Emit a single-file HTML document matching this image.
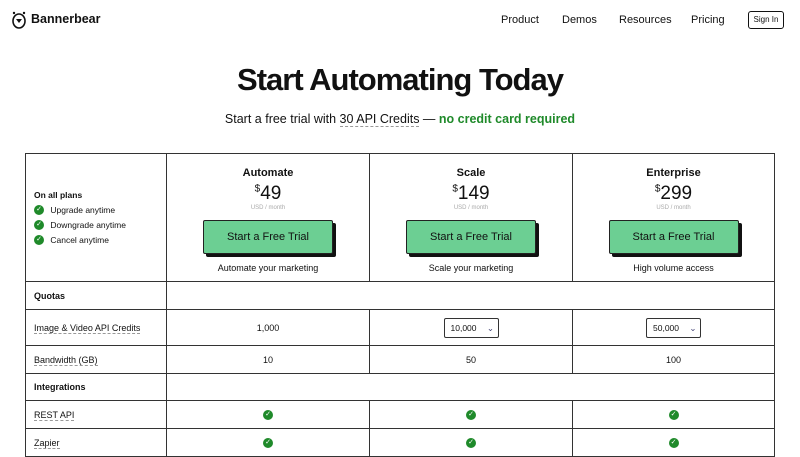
<!DOCTYPE html><html><head><style>
*{margin:0;padding:0;box-sizing:border-box}
body{width:800px;height:450px;overflow:hidden;background:#fff;font-family:"Liberation Sans",sans-serif;color:#111;position:relative}
.a{position:absolute}
.nav{font-size:11px}
table{position:absolute;left:25px;top:153px;width:750px;border-collapse:collapse;font-size:9px}
td{border:1px solid #333;text-align:center;vertical-align:middle}
td.l{text-align:left;padding-left:8px}
.u{border-bottom:1px dashed #999}
.ck{display:inline-block;width:10px;height:10px;border-radius:50%;background:#1f8a2a;color:#fff;font-size:7px;line-height:10px;text-align:center;vertical-align:middle}
.l .ck{margin-right:4px}
.btn{width:130px;height:34px;margin:0 auto;background:#6ccf93;border:1px solid #222;box-shadow:3px 3px 0 #111;border-radius:2px;font-size:11px;line-height:32px}
.sel{display:inline-block;width:55px;height:20px;border:1px solid #333;border-radius:2px;text-align:left;padding-left:6px;line-height:18px;font-size:8.5px}
</style></head><body>
<svg class="a" style="left:11px;top:11px" width="16" height="18" viewBox="0 0 16 18"><ellipse cx="8" cy="10" rx="6" ry="7" fill="none" stroke="#111" stroke-width="1.6"/><circle cx="3" cy="2" r="1.2" fill="#111"/><circle cx="13" cy="2" r="1.2" fill="#111"/><path d="M5 8h6l-3 4z" fill="#111"/></svg>
<div class="a" style="left:31px;top:12px;font-size:12.5px;font-weight:bold">Bannerbear</div>
<div class="a nav" style="left:501px;top:14px">Product</div>
<div class="a nav" style="left:562px;top:14px">Demos</div>
<div class="a nav" style="left:619px;top:14px">Resources</div>
<div class="a nav" style="left:691px;top:14px">Pricing</div>
<div class="a" style="left:748px;top:11px;width:36px;height:18px;border:1px solid #111;border-radius:3px;font-size:8px;text-align:center;line-height:16px">Sign In</div>
<div class="a" style="left:0;width:800px;top:62px;text-align:center;font-size:31px;font-weight:bold;letter-spacing:-1px">Start Automating Today</div>
<div class="a" style="left:0;width:800px;top:112px;text-align:center;font-size:12.5px">Start a free trial with <span class="u">30 API Credits</span> — <b style="color:#1f8a2a">no credit card required</b></div>
<table>
<tr style="height:128px"><td class="l" style="width:141px;font-size:8.5px;line-height:15px"><b>On all plans</b><br><span class="ck">✓</span> Upgrade anytime<br><span class="ck">✓</span> Downgrade anytime<br><span class="ck">✓</span> Cancel anytime</td>
<td style="width:203px;padding-top:4px"><div style="font-size:11px;font-weight:bold">Automate</div><div style="font-size:19px;margin-top:4px"><sup style="font-size:10px">$</sup>49</div><div style="font-size:6px;color:#aaa;margin-bottom:9px">USD / month</div><div class="btn">Start a Free Trial</div><div style="margin-top:9px">Automate your marketing</div></td>
<td style="width:203px;padding-top:4px"><div style="font-size:11px;font-weight:bold">Scale</div><div style="font-size:19px;margin-top:4px"><sup style="font-size:10px">$</sup>149</div><div style="font-size:6px;color:#aaa;margin-bottom:9px">USD / month</div><div class="btn">Start a Free Trial</div><div style="margin-top:9px">Scale your marketing</div></td>
<td style="padding-top:4px"><div style="font-size:11px;font-weight:bold">Enterprise</div><div style="font-size:19px;margin-top:4px"><sup style="font-size:10px">$</sup>299</div><div style="font-size:6px;color:#aaa;margin-bottom:9px">USD / month</div><div class="btn">Start a Free Trial</div><div style="margin-top:9px">High volume access</div></td></tr>
<tr style="height:28px"><td class="l"><b>Quotas</b></td><td colspan="3"></td></tr>
<tr style="height:36px"><td class="l"><span class="u">Image &amp; Video API Credits</span></td><td>1,000</td><td><span class="sel">10,000 <span style="color:#447;margin-left:8px">⌄</span></span></td><td><span class="sel">50,000 <span style="color:#447;margin-left:8px">⌄</span></span></td></tr>
<tr style="height:28px"><td class="l"><span class="u">Bandwidth (GB)</span></td><td>10</td><td>50</td><td>100</td></tr>
<tr style="height:27px"><td class="l"><b>Integrations</b></td><td colspan="3"></td></tr>
<tr style="height:28px"><td class="l"><span class="u">REST API</span></td><td><span class="ck">✓</span></td><td><span class="ck">✓</span></td><td><span class="ck">✓</span></td></tr>
<tr style="height:28px"><td class="l"><span class="u">Zapier</span></td><td><span class="ck">✓</span></td><td><span class="ck">✓</span></td><td><span class="ck">✓</span></td></tr>
</table>
</body></html>
